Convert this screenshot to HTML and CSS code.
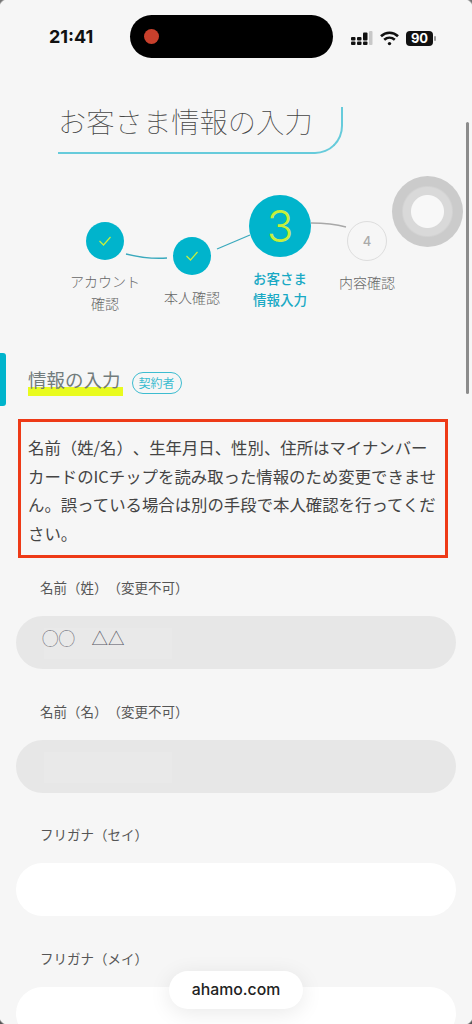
FILE: index.html
```html
<!DOCTYPE html>
<html lang="ja">
<head>
<meta charset="utf-8">
<title>お客さま情報の入力</title>
<link rel="stylesheet" href="styles.css">
</head>
<body>
<div class="screen">
  <header class="status">
    <span class="time">21:41</span>
    <div class="island"><span class="rec"></span></div>
    <div class="sys">
      <svg class="signal" width="22" height="14" viewBox="0 0 22 14"><rect x="0" y="6" width="4.500" height="3.500" rx="1"/><rect x="0" y="10.500" width="4.500" height="3.500" rx="1"/><rect x="6" y="6" width="4.500" height="3.500" rx="1"/><rect x="6" y="10.500" width="4.500" height="3.500" rx="1"/><rect x="12" y="1.500" width="4.500" height="8" rx="1"/><rect x="12" y="10.500" width="4.500" height="3.500" rx="1"/><rect x="18" y="0" width="3.500" height="14" rx="1" fill="#c8c8c8"/></svg>
      <svg class="wifi" width="19" height="15" viewBox="0 0 19 15" fill="none" stroke="#111" stroke-width="2.600"><path d="M1 5.200C5.800.6 13.200.6 18 5.200"/><path d="M4.200 8.800c3.100-2.800 7.500-2.800 10.600 0"/><circle cx="9.500" cy="12.600" r="1.700" fill="#111" stroke="none"/></svg>
      <span class="battery">90</span>
    </div>
  </header>

  <div class="title-wrap">
    <h1 class="title">お客さま情報の入力</h1>
  </div>

  <section class="stepper">
    <svg class="links" width="472" height="150" viewBox="0 0 472 150" fill="none">
      <path d="M126 59C142 63 152 64 167 63" stroke="#3aa9bd" stroke-width="1.300"/>
      <path d="M217 54L250 40" stroke="#3aa9bd" stroke-width="1.300"/>
      <path d="M311 28C325 28 335 29 346 32" stroke="#a8a8a8" stroke-width="1.300"/>
    </svg>
    <div class="ghost"></div>
    <div class="step s1">
      <span class="dot"><svg width="14" height="12" viewBox="0 0 14 12" fill="none"><path d="M1.500 6L5.500 10L12.500 2" stroke="#c6ef3c" stroke-width="1.200"/></svg></span>
      <p class="step-label">アカウント<br>確認</p>
    </div>
    <div class="step s2">
      <span class="dot"><svg width="14" height="12" viewBox="0 0 14 12" fill="none"><path d="M1.500 6L5.500 10L12.500 2" stroke="#c6ef3c" stroke-width="1.200"/></svg></span>
      <p class="step-label">本人確認</p>
    </div>
    <div class="step s3">
      <span class="dot big">3</span>
      <p class="step-label current">お客さま<br>情報入力</p>
    </div>
    <div class="step s4">
      <span class="dot todo">4</span>
      <p class="step-label">内容確認</p>
    </div>
  </section>

  <section class="section-head">
    <h2 class="section-title">情報の入力</h2>
    <span class="tag">契約者</span>
  </section>

  <p class="notice">名前（姓/名）、生年月日、性別、住所はマイナンバーカードのICチップを読み取った情報のため変更できません。誤っている場合は別の手段で本人確認を行ってください。</p>

  <form class="form">
    <div class="field">
      <label class="label">名前（姓）（変更不可）</label>
      <div class="input locked"><span class="mask"></span><span class="value">◯◯　△△</span></div>
    </div>
    <div class="field">
      <label class="label">名前（名）（変更不可）</label>
      <div class="input locked"><span class="mask"></span></div>
    </div>
    <div class="field">
      <label class="label">フリガナ（セイ）</label>
      <div class="input"></div>
    </div>
    <div class="field">
      <label class="label">フリガナ（メイ）</label>
      <div class="input"></div>
    </div>
  </form>

  <div class="scrollbar"></div>
  <div class="url">ahamo.com</div>
  <div class="corner tl"></div>
  <div class="corner tr"></div>
  <div class="corner bl"></div>
  <div class="corner br"></div>
</div>
</body>
</html>
```

FILE: styles.css
```css
* { box-sizing: border-box; }
html, body { margin: 0; padding: 0; }
body { background: #f6f6f6; font-family: "Noto Sans CJK JP", "Noto Sans", sans-serif; color: #444; text-spacing-trim: space-all; }
.screen { position: relative; width: 472px; height: 1024px; overflow: hidden; background: #f6f6f6; }

.status { height: 107px; padding: 15px 0 0 49px; display: flex; align-items: flex-start; }
.time { width: 81px; margin-top: 9px; font: 700 18px/26px "Inter", "Liberation Sans", sans-serif; color: #111; }
.island { width: 203px; height: 43px; background: #000; border-radius: 22px; padding: 14px; }
.rec { display: block; width: 15px; height: 15px; border-radius: 50%; background: #c8402c; }
.sys { margin: 15px 0 0 18px; display: flex; align-items: center; gap: 7px; height: 16px; }
.signal { fill: #111; }
.battery { position: relative; width: 27px; height: 15px; margin-left: 0; border-radius: 4px; background: #111; color: #fff; font: 700 13px/15px "Inter", "Liberation Sans", sans-serif; text-align: center; }
.battery::after { content: ""; position: absolute; left: 28px; top: 5px; width: 1.500px; height: 5px; border-radius: 1px; background: #999; }

.title-wrap { padding-left: 58px; height: 88px; }
.title { width: 285px; height: 47px; margin: 0; padding: 0; border: solid #66cbdb; border-width: 0 2px 2px 0; border-bottom-right-radius: 28px; font-size: 28.300px; font-weight: 100; line-height: 28px; color: #444; white-space: nowrap; }

.stepper { position: relative; height: 158px; }
.links { position: absolute; left: 0; top: 0; }
.ghost { position: absolute; left: 392px; top: -19px; width: 71px; height: 71px; border-radius: 50%; background: radial-gradient(circle, #f8f8f8 0 16px, #d9d9d9 17px 24px, #cbcbcb 26px); }
.step { position: absolute; width: 90px; display: flex; flex-direction: column; align-items: center; }
.s1 { left: 60px; top: 27px; }
.s2 { left: 147px; top: 42px; }
.s3 { left: 235px; top: 0; }
.s4 { left: 322px; top: 26px; }
.dot { display: flex; align-items: center; justify-content: center; width: 38px; height: 38px; border-radius: 50%; background: #00b4cc; }
.dot.big { width: 62px; height: 62px; font: 300 44px/62px "Inter", "Liberation Sans", sans-serif; color: #c6ef3c; }
.dot.todo { width: 40px; height: 40px; background: #f6f6f6; border: 1px solid #ddd; font: 500 13px/1 "Inter", "Liberation Sans", sans-serif; color: #aaa; }
.step-label { margin: 10px 0 0; font-size: 14px; line-height: 22px; color: #666; font-weight: 300; text-align: center; white-space: nowrap; }
.s2 .step-label { margin-top: 11px; }
.s3 .step-label { margin-top: 11px; line-height: 21px; }
.step-label.current { color: #18a9c4; font-weight: 500; font-size: 13.500px; }

.section-head { position: relative; height: 54px; padding: 13px 0 0 28px; display: flex; align-items: flex-start; gap: 9px; }
.section-head::before { content: ""; position: absolute; left: 0; top: 0; width: 6px; height: 53px; border-radius: 0 3px 3px 0; background: #00b4cc; }
.section-title { margin: 0; height: 30px; padding-right: 2px; font-size: 18.500px; font-weight: 400; line-height: 26px; color: #727c7c; background: linear-gradient(#e9fb1e, #e9fb1e) 0 100% / 100% 9px no-repeat; white-space: nowrap; }
.tag { margin-top: 6px; height: 22px; padding: 0 6px; border: 1px solid #3dbcd0; border-radius: 11px; font-size: 12px; line-height: 20px; color: #3dbcd0; }

.notice { width: 430px; height: 139px; margin: 12px 0 0 18px; padding: 11px 5px 0 7px; border: 3px solid #ee3a17; font-size: 16.400px; line-height: 28.500px; color: #444; }

.form { display: flex; flex-direction: column; gap: 31.500px; padding: 19px 16px 0; }
.field { display: flex; flex-direction: column; gap: 18px; }
.label { padding-left: 24px; font-size: 13.500px; line-height: 21px; color: #555; white-space: nowrap; }
.input { position: relative; height: 53px; border-radius: 27px; background: #fff; padding: 6px 26px; }
.input.locked { background: #e7e7e7; }
.mask { position: absolute; left: 28px; top: 12px; width: 128px; height: 31px; background: #e9e9e9; }
.value { position: relative; font-size: 16.500px; line-height: 32px; font-weight: 300; color: #555562; white-space: nowrap; }

.scrollbar { position: absolute; left: 466px; top: 122px; width: 3px; height: 272px; border-radius: 2px; background: #8c8c8c; }
.url { position: absolute; left: 169px; top: 971px; width: 134px; height: 38px; border-radius: 19px; background: #fff; box-shadow: 0 4px 22px rgba(0,0,0,.09); font: 500 15.800px/38px "Inter", "Liberation Sans", sans-serif; color: #222; text-align: center; }

.corner { position: absolute; width: 9px; height: 9px; }
.tl { left: 0; top: 0; background: radial-gradient(circle at 100% 100%, transparent 9.500px, #777 11px); }
.tr { right: 0; top: 0; background: radial-gradient(circle at 0 100%, transparent 9.500px, #777 11px); }
.bl { left: 0; bottom: 0; background: radial-gradient(circle at 100% 0, transparent 9.500px, #555 11px); }
.br { right: 0; bottom: 0; background: radial-gradient(circle at 0 0, transparent 9.500px, #555 11px); }
```
